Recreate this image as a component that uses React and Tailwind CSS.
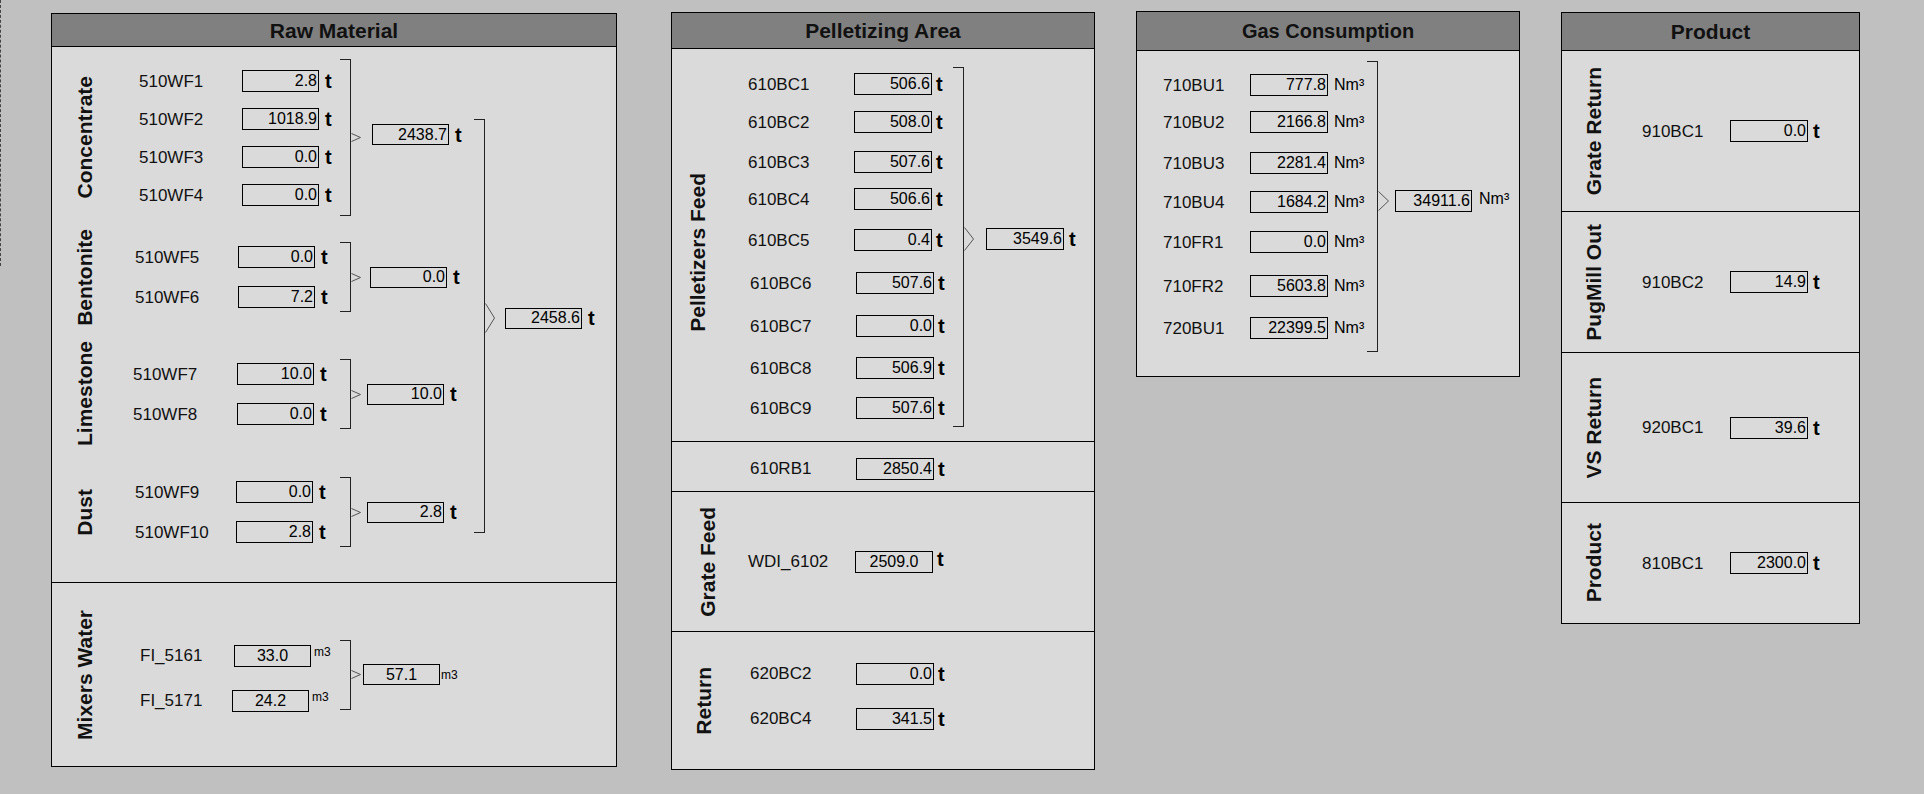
const LABEL = 'shrink-0 whitespace-nowrap text-[17px] leading-none text-[#111]';
const UNIT = 'shrink-0 text-[20px] font-bold leading-none';

const RAW_GROUPS = [
  {
    name: 'Concentrate',
    rows: [['510WF1', '2.8'], ['510WF2', '1018.9'], ['510WF3', '0.0'], ['510WF4', '0.0']],
    sum: '2438.7',
    cls: 'mt-[12px] h-[157px]',
    pad: 'pl-[23px]',
    label: 'w-[103px]',
    rowsCls: 'pt-[11px] gap-[16px]',
    sumCls: 'ml-[11px] mb-[6px]',
    unitCls: 'mb-[6px]'
  },
  {
    name: 'Bentonite',
    rows: [['510WF5', '0.0'], ['510WF6', '7.2']],
    sum: '0.0',
    cls: 'mt-[26px] h-[70px]',
    pad: 'pl-[19px]',
    label: 'w-[103px]',
    rowsCls: 'pt-[4px] gap-[18px]',
    sumCls: 'ml-[9px]',
    unitCls: ''
  },
  {
    name: 'Limestone',
    rows: [['510WF7', '10.0'], ['510WF8', '0.0']],
    sum: '10.0',
    cls: 'mt-[47px] h-[70px]',
    pad: 'pl-[17px]',
    label: 'w-[104px]',
    rowsCls: 'pt-[4px] gap-[18px]',
    sumCls: 'ml-[6px]',
    unitCls: ''
  },
  {
    name: 'Dust',
    rows: [['510WF9', '0.0'], ['510WF10', '2.8']],
    sum: '2.8',
    cls: 'mt-[48px] h-[70px]',
    pad: 'pl-[19px]',
    label: 'w-[101px]',
    rowsCls: 'pt-[4px] gap-[18px]',
    sumCls: 'ml-[6px]',
    unitCls: ''
  }
];

const FEED = [
  ['610BC1', '506.6', 'pl-[26px]'],
  ['610BC2', '508.0', 'mt-[16px] pl-[26px]'],
  ['610BC3', '507.6', 'mt-[18px] pl-[26px]'],
  ['610BC4', '506.6', 'mt-[15px] pl-[26px]'],
  ['610BC5', '0.4', 'mt-[19px] pl-[26px]'],
  ['610BC6', '507.6', 'mt-[21px] pl-[28px]'],
  ['610BC7', '0.0', 'mt-[21px] pl-[28px]'],
  ['610BC8', '506.9', 'mt-[20px] pl-[28px]'],
  ['610BC9', '507.6', 'mt-[18px] pl-[28px]']
];

const GAS = [
  ['710BU1', '777.8', ''],
  ['710BU2', '2166.8', 'mt-[15px]'],
  ['710BU3', '2281.4', 'mt-[19px]'],
  ['710BU4', '1684.2', 'mt-[17px]'],
  ['710FR1', '0.0', 'mt-[18px]'],
  ['710FR2', '5603.8', 'mt-[22px]'],
  ['720BU1', '22399.5', 'mt-[20px]']
];

const PRODUCT = [
  ['Grate Return', '910BC1', '0.0', 'h-[161px] border-b'],
  ['PugMill Out', '910BC2', '14.9', 'h-[141px] border-b'],
  ['VS Return', '920BC1', '39.6', 'h-[150px] border-b'],
  ['Product', '810BC1', '2300.0', 'flex-1']
];

function VLabel({ children, className = '' }) {
  return (
    <div className={`flex shrink-0 items-center justify-center self-stretch ${className}`}>
      <span className="rotate-180 whitespace-nowrap text-[21px] font-bold leading-none text-[#111] [writing-mode:vertical-rl]">
        {children}
      </span>
    </div>
  );
}

function Box({ children, className = '' }) {
  return (
    <div className={`flex shrink-0 items-center border border-black px-px text-[16px] leading-none text-black ${className}`}>
      {children}
    </div>
  );
}

function Bracket({ className = '' }) {
  return <div className={`shrink-0 border-y border-r border-[#222] ${className}`} />;
}

function Arrow({ w, h }) {
  return (
    <svg width={w} height={h} viewBox={`0 0 ${w} ${h}`} className="shrink-0">
      <path d={`M0.5 0.5 L${w - 0.5} ${h / 2} L0.5 ${h - 0.5}`} fill="none" stroke="#555" strokeWidth="1" />
    </svg>
  );
}

function Panel({ title, className = '', headCls = '', children }) {
  return (
    <section className={`flex shrink-0 flex-col border border-black bg-[#dadada] ${className}`}>
      <header
        className={`flex shrink-0 items-center justify-center border-b border-black bg-[#808080] font-bold leading-none text-[#111] ${headCls}`}
      >
        {title}
      </header>
      {children}
    </section>
  );
}

function Row({ id, value, className = '', labelCls = 'w-[106px]', boxCls = 'justify-end', unit = 't', unitCls = 'ml-[4px]' }) {
  return (
    <div className={`flex h-[22px] items-center ${className}`}>
      <span className={`${LABEL} ${labelCls}`}>{id}</span>
      <Box className={`h-[22px] w-[78px] ${boxCls}`}>{value}</Box>
      {unit === 't' ? (
        <span className={`${UNIT} ${unitCls}`}>t</span>
      ) : (
        <span className={`shrink-0 text-[16px] leading-none ${unitCls}`}>Nm³</span>
      )}
    </div>
  );
}

function RawGroup({ g }) {
  return (
    <div className={`flex items-center ${g.cls}`}>
      <VLabel className="w-[64px]">{g.name}</VLabel>
      <div className={`flex w-[224px] shrink-0 flex-col self-stretch ${g.rowsCls}`}>
        {g.rows.map(([id, v]) => (
          <div key={id} className={`flex h-[22px] items-center ${g.pad}`}>
            <span className={`${LABEL} ${g.label}`}>{id}</span>
            <Box className="h-[22px] w-[77px] justify-end">{v}</Box>
            <span className={`ml-[6px] ${UNIT}`}>t</span>
          </div>
        ))}
      </div>
      <Bracket className="w-[11px] self-stretch" />
      <Arrow w={10} h={9} />
      <Box className={`h-[21px] w-[77px] justify-end ${g.sumCls}`}>{g.sum}</Box>
      <span className={`ml-[6px] ${UNIT} ${g.unitCls}`}>t</span>
    </div>
  );
}

function RawMaterial() {
  return (
    <Panel title="Raw Material" className="ml-[50px] mt-[13px] h-[754px] w-[566px]" headCls="h-[33px] text-[21px]">
      <div className="flex h-[536px] shrink-0 items-start border-b border-black">
        <div className="flex w-[422px] shrink-0 flex-col">
          {RAW_GROUPS.map((g) => (
            <RawGroup key={g.name} g={g} />
          ))}
        </div>
        <Bracket className="mt-[72px] h-[414px] w-[11px]" />
        <div className="mt-[256px] flex items-center">
          <Arrow w={10} h={30} />
          <Box className="ml-[10px] h-[21px] w-[77px] justify-end">2458.6</Box>
          <span className={`ml-[6px] ${UNIT}`}>t</span>
        </div>
      </div>

      <div className="flex flex-1 items-center">
        <VLabel className="w-[64px]">Mixers Water</VLabel>
        <div className="flex h-[70px] items-center">
          <div className="flex w-[224px] shrink-0 flex-col gap-[23px] self-stretch pt-[5px]">
            {[
              ['FI_5161', '33.0', 'pl-[24px]', 'w-[94px]'],
              ['FI_5171', '24.2', 'pl-[24px]', 'w-[92px]']
            ].map(([id, v, pad, lw]) => (
              <div key={id} className={`flex h-[22px] items-start ${pad}`}>
                <span className={`${LABEL} ${lw} self-center`}>{id}</span>
                <Box className="h-[22px] w-[77px] justify-center">{v}</Box>
                <span className="ml-[3px] mt-[1px] shrink-0 text-[12px] leading-none">m3</span>
              </div>
            ))}
          </div>
          <Bracket className="h-[70px] w-[11px]" />
          <Arrow w={10} h={9} />
          <Box className="ml-[2px] h-[21px] w-[77px] justify-center">57.1</Box>
          <span className="ml-px shrink-0 text-[12px] leading-none">m3</span>
        </div>
      </div>
    </Panel>
  );
}

function Pelletizing() {
  return (
    <Panel title="Pelletizing Area" className="ml-[54px] mt-[12px] h-[758px] w-[424px]" headCls="h-[36px] text-[21px]">
      <div className="flex h-[393px] shrink-0 items-start border-b border-black">
        <VLabel className="w-[50px] pt-[14px]">Pelletizers Feed</VLabel>
        <div className="flex w-[231px] shrink-0 flex-col pt-[24px]">
          {FEED.map(([id, v, cls]) => (
            <Row key={id} id={id} value={v} className={cls} />
          ))}
        </div>
        <Bracket className="mt-[18px] h-[360px] w-[11px]" />
        <div className="mt-[178px] flex items-center">
          <Arrow w={10} h={24} />
          <Box className="ml-[12px] h-[22px] w-[78px] justify-end">3549.6</Box>
          <span className={`ml-[5px] ${UNIT}`}>t</span>
        </div>
      </div>

      <div className="flex h-[50px] shrink-0 items-center border-b border-black pl-[78px] pt-[4px]">
        <Row id="610RB1" value="2850.4" />
      </div>

      <div className="flex h-[140px] shrink-0 items-center border-b border-black">
        <VLabel className="w-[70px]">Grate Feed</VLabel>
        <Row id="WDI_6102" value="2509.0" className="pl-[6px]" labelCls="w-[107px]" boxCls="justify-center" unitCls="mb-[6px] ml-[4px]" />
      </div>

      <div className="flex flex-1 items-center">
        <VLabel className="w-[62px]">Return</VLabel>
        <div className="mb-[9px] flex flex-col gap-[23px] pl-[16px]">
          <Row id="620BC2" value="0.0" />
          <Row id="620BC4" value="341.5" />
        </div>
      </div>
    </Panel>
  );
}

function Gas() {
  return (
    <Panel title="Gas Consumption" className="ml-[41px] mt-[11px] h-[366px] w-[384px]" headCls="h-[39px] text-[20px]">
      <div className="flex flex-1 items-start">
        <div className="flex w-[230px] shrink-0 flex-col pl-[26px] pt-[23px]">
          {GAS.map(([id, v, cls]) => (
            <Row key={id} id={id} value={v} className={cls} labelCls="w-[87px]" unit="Nm" unitCls="ml-[6px]" />
          ))}
        </div>
        <Bracket className="mt-[10px] h-[291px] w-[11px]" />
        <div className="mt-[139px] flex items-center">
          <Arrow w={11} h={20} />
          <Box className="ml-[6px] h-[22px] w-[77px] justify-end">34911.6</Box>
          <span className="mb-[4px] ml-[7px] shrink-0 text-[16px] leading-none">Nm³</span>
        </div>
      </div>
    </Panel>
  );
}

function Product() {
  return (
    <Panel title="Product" className="ml-[41px] mt-[12px] h-[612px] w-[299px]" headCls="h-[38px] text-[21px]">
      {PRODUCT.map(([name, id, v, cls]) => (
        <div key={id} className={`flex shrink-0 items-center border-black ${cls}`}>
          <VLabel className="w-[62px]">{name}</VLabel>
          <Row id={id} value={v} className="pl-[18px]" labelCls="w-[88px]" unitCls="ml-[5px]" />
        </div>
      ))}
    </Panel>
  );
}

export default function App() {
  return (
    <div className="flex h-[794px] w-[1924px] items-start overflow-hidden bg-[#c0c0c0] font-['Liberation_Sans',Arial,sans-serif] text-black">
      <div className="h-[266px] w-px shrink-0 border-l border-dashed border-[#444]" />
      <RawMaterial />
      <Pelletizing />
      <Gas />
      <Product />
    </div>
  );
}
